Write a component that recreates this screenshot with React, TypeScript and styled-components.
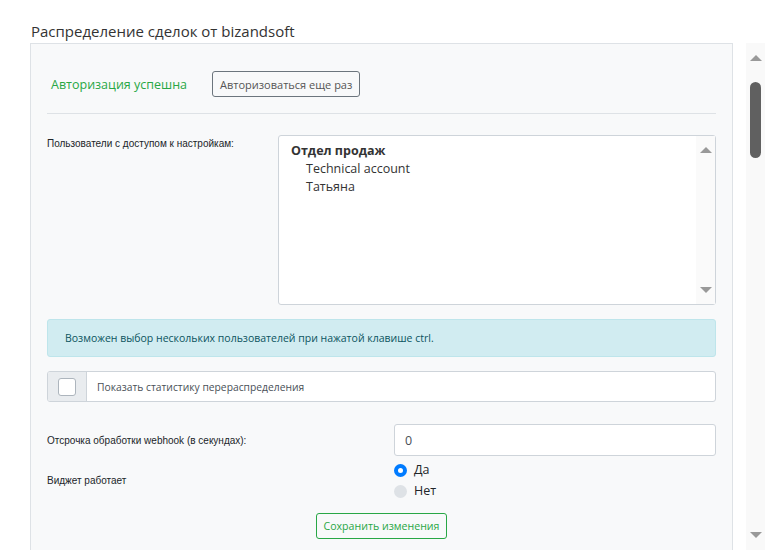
import React, { useState } from 'react';
import styled, { createGlobalStyle } from 'styled-components';

const GlobalStyle = createGlobalStyle`
  body {
    margin: 0;
    background: #fff;
    font-family: 'Open Sans', 'Noto Sans', sans-serif;
    color: #212529;
  }
`;

const Page = styled.div`
  display: flex;
  height: 550px;
  overflow: hidden;
`;

const Main = styled.div`
  width: 703px;
  padding: 0 13px 0 30px;
  display: flex;
  flex-direction: column;
`;

const Title = styled.h1`
  margin: 0;
  padding: 19px 0 0 1px;
  height: 24px;
  font-size: 15px;
  font-weight: 400;
  line-height: 24px;
  color: #333;
`;

const Panel = styled.div`
  flex: 1;
  background: #f8f9fa;
  border: 1px solid #dee2e6;
  border-bottom: none;
  padding: 27px 16px 0 16px;
  overflow: hidden;
`;

const AuthRow = styled.div`
  display: flex;
  align-items: center;
  gap: 25px;
  padding: 0 0 16px 4px;
  border-bottom: 1px solid #dee2e6;
`;

const Success = styled.span`
  color: #28a745;
  font-size: 12.5px;
`;

const OutlineButton = styled.button<{ $tone?: 'gray' | 'green' }>`
  font-family: inherit;
  font-size: ${p => (p.$tone === 'green' ? '10.6px' : '11px')};
  height: 26px;
  padding: 0 7px;
  background: transparent;
  border: 1px solid ${p => (p.$tone === 'green' ? '#28a745' : '#6c757d')};
  color: ${p => (p.$tone === 'green' ? '#28a745' : '#555')};
  border-radius: 3px;
  cursor: pointer;
`;

const FormRow = styled.div<{ $cols: string; $top: number }>`
  display: grid;
  grid-template-columns: ${p => p.$cols};
  align-items: center;
  margin-top: ${p => p.$top}px;
`;

const Label = styled.div<{ $selfTop?: boolean }>`
  font-family: 'Liberation Sans', Arial, sans-serif;
  font-size: 10px;
  color: #212529;
  align-self: ${p => (p.$selfTop ? 'start' : 'center')};
  padding-top: ${p => (p.$selfTop ? '3px' : '0')};
`;

const ListBox = styled.div`
  height: 168px;
  background: #fff;
  border: 1px solid #ced4da;
  border-radius: 3px;
  display: flex;
`;

const ListItems = styled.div`
  flex: 1;
  padding: 6px 12px;
  font-size: 12.5px;
  line-height: 18px;
  color: #333;
`;

const Group = styled.div`
  font-weight: 700;
`;

const Option = styled.div`
  padding-left: 15px;
`;

const ScrollCol = styled.div<{ $w: number; $bg: string; $pad: number }>`
  width: ${p => p.$w}px;
  background: ${p => p.$bg};
  display: flex;
  flex-direction: column;
  align-items: center;
  padding: ${p => p.$pad}px 0;
  box-sizing: border-box;
`;

const Arrow = styled.div<{ $down?: boolean }>`
  width: 0;
  height: 0;
  border-left: 6px solid transparent;
  border-right: 6px solid transparent;
  ${p => (p.$down ? 'border-top: 6px solid #999;' : 'border-bottom: 6px solid #999;')}
`;

const Spacer = styled.div`
  flex: 1;
`;

const Thumb = styled.div`
  width: 11px;
  height: 76px;
  margin-top: 21px;
  background: #606060;
  border-radius: 6px;
`;

const Alert = styled.div`
  margin-top: 14px;
  height: 36px;
  display: flex;
  align-items: center;
  padding: 0 17px;
  background: #d1ecf1;
  border: 1px solid #bee5eb;
  border-radius: 3px;
  color: #0c5460;
  font-size: 10.5px;
`;

const InputGroup = styled.div`
  margin-top: 14px;
  height: 29px;
  display: flex;
  border: 1px solid #ced4da;
  border-radius: 3px;
  background: #fff;
  overflow: hidden;
`;

const Addon = styled.div`
  width: 38px;
  background: #e9ecef;
  border-right: 1px solid #ced4da;
  display: flex;
  align-items: center;
  justify-content: center;
`;

const Box = styled.div`
  width: 16px;
  height: 16px;
  border: 1px solid #adb5bd;
  border-radius: 3px;
  background: #fff;
`;

const GroupText = styled.div`
  display: flex;
  align-items: center;
  padding-left: 10px;
  font-size: 10.3px;
  color: #495057;
`;

const TextInput = styled.div`
  height: 30px;
  border: 1px solid #ced4da;
  border-radius: 3px;
  background: #fff;
  display: flex;
  align-items: center;
  padding-left: 10px;
  font-size: 12.5px;
  color: #495057;
`;

const Radios = styled.div`
  display: flex;
  flex-direction: column;
  gap: 3px;
`;

const RadioRow = styled.label`
  display: flex;
  align-items: center;
  gap: 7px;
  font-size: 12.5px;
  line-height: 18px;
  color: #212529;
  cursor: pointer;
`;

const Dot = styled.span<{ $on: boolean }>`
  width: 13px;
  height: 13px;
  border-radius: 50%;
  box-sizing: border-box;
  background: ${p => (p.$on ? '#fff' : '#dee2e6')};
  border: ${p => (p.$on ? '4px solid #007bff' : 'none')};
`;

const Actions = styled.div`
  display: flex;
  justify-content: center;
  margin-top: 13px;
`;

export default function App() {
  const [works, setWorks] = useState(true);

  return (
    <>
      <GlobalStyle />
      <Page>
        <Main>
          <Title>Распределение сделок от bizandsoft</Title>
          <Panel>
            <AuthRow>
              <Success>Авторизация успешна</Success>
              <OutlineButton>Авторизоваться еще раз</OutlineButton>
            </AuthRow>

            <FormRow $cols="231px 1fr" $top={21}>
              <Label $selfTop>Пользователи с доступом к настройкам:</Label>
              <ListBox>
                <ListItems>
                  <Group>Отдел продаж</Group>
                  <Option>Technical account</Option>
                  <Option>Татьяна</Option>
                </ListItems>
                <ScrollCol $w={19} $bg="#fafafa" $pad={11}>
                  <Arrow />
                  <Spacer />
                  <Arrow $down />
                </ScrollCol>
              </ListBox>
            </FormRow>

            <Alert>Возможен выбор нескольких пользователей при нажатой клавише ctrl.</Alert>

            <InputGroup>
              <Addon>
                <Box />
              </Addon>
              <GroupText>Показать статистику перераспределения</GroupText>
            </InputGroup>

            <FormRow $cols="347px 1fr" $top={22}>
              <Label>Отсрочка обработки webhook (в секундах):</Label>
              <TextInput>0</TextInput>
            </FormRow>

            <FormRow $cols="347px 1fr" $top={5}>
              <Label>Виджет работает</Label>
              <Radios>
                <RadioRow onClick={() => setWorks(true)}>
                  <Dot $on={works} />
                  Да
                </RadioRow>
                <RadioRow onClick={() => setWorks(false)}>
                  <Dot $on={!works} />
                  Нет
                </RadioRow>
              </Radios>
            </FormRow>

            <Actions>
              <OutlineButton $tone="green">Сохранить изменения</OutlineButton>
            </Actions>
          </Panel>
        </Main>
        <ScrollCol $w={19} $bg="#f9f9f9" $pad={12} style={{ marginTop: 43 }}>
          <Arrow />
          <Thumb />
          <Spacer />
          <Arrow $down />
        </ScrollCol>
      </Page>
    </>
  );
}
